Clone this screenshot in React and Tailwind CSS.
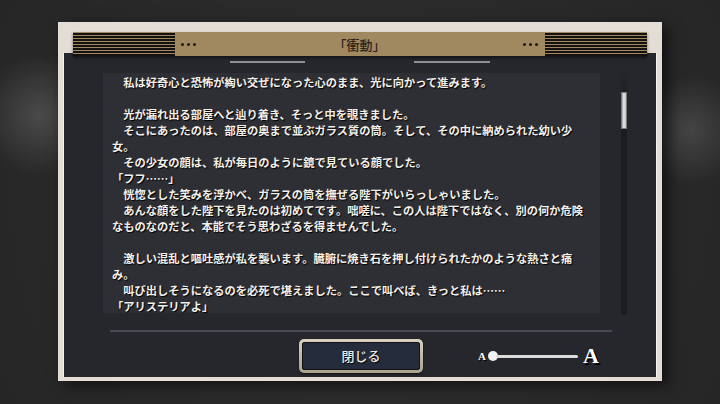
import React from 'react';

const lines = [
  '\u3000私は好奇心と恐怖が綯い交ぜになった心のまま、光に向かって進みます。',
  '',
  '\u3000光が漏れ出る部屋へと辿り着き、そっと中を覗きました。',
  '\u3000そこにあったのは、部屋の奥まで並ぶガラス質の筒。そして、その中に納められた幼い少',
  '女。',
  '\u3000その少女の顔は、私が毎日のように鏡で見ている顔でした。',
  '「フフ……」',
  '\u3000恍惚とした笑みを浮かべ、ガラスの筒を撫ぜる陛下がいらっしゃいました。',
  '\u3000あんな顔をした陛下を見たのは初めてです。咄嗟に、この人は陛下ではなく、別の何か危険',
  'なものなのだと、本能でそう思わざるを得ませんでした。',
  '',
  '\u3000激しい混乱と嘔吐感が私を襲います。臓腑に焼き石を押し付けられたかのような熱さと痛',
  'み。',
  '\u3000叫び出しそうになるのを必死で堪えました。ここで叫べば、きっと私は……',
  '「アリステリアよ」',
];

const Stripes = () => (
  <div className="w-[102px] flex flex-col gap-[1px] py-[1px]">
    {[0, 1, 2, 3, 4, 5, 6, 7].map((i) => (
      <div key={i} className="h-[2px] bg-[#141210]" />
    ))}
  </div>
);

const Dots = () => (
  <div className="flex gap-[3px] items-center">
    <span className="w-[3px] h-[3px] rounded-full bg-[#1c1812]" />
    <span className="w-[3px] h-[3px] rounded-full bg-[#1c1812]" />
    <span className="w-[3px] h-[3px] rounded-full bg-[#1c1812]" />
  </div>
);

export default function App() {
  return (
    <div
      className="w-[720px] h-[404px] overflow-hidden bg-[#2b2b2b] bg-[radial-gradient(circle_at_40px_115px,#4a4a4a_0,transparent_60px),radial-gradient(circle_at_690px_130px,#444_0,transparent_55px),radial-gradient(circle_at_360px_200px,#303030_0,#262626_420px)] pt-[22px] pl-[58px]"
      style={{ fontFamily: '"Noto Sans CJK JP", "Noto Sans", sans-serif' }}
    >
      {/* frame */}
      <div className="w-[604px] h-[359px] bg-[#e4ddd6] pt-[10px] shadow-[6px_4px_14px_rgba(0,0,0,0.6)]">
        {/* header */}
        <div className="relative z-10 mx-[15px] h-[24px] bg-[#a08961] flex items-center shadow-[0_2px_3px_rgba(0,0,0,0.5)]">
          <Stripes />
          <div className="ml-[6px]"><Dots /></div>
          <div className="flex-1 text-center text-[13px] font-medium text-[#2a231a] leading-none">「衝動」</div>
          <div className="mr-[7px]"><Dots /></div>
          <Stripes />
        </div>

        {/* panel */}
        <div className="mx-[5px] -mt-[3px] h-[324px] bg-[#26272c] border-x border-[#f6f3ef] border-b-0">
          <div className="flex justify-center gap-[109px] pt-[8px]">
            <div className="w-[75px] h-[2px] bg-[#8d8f93]" />
            <div className="w-[76px] h-[2px] bg-[#8d8f93]" />
          </div>

          <div className="flex items-start mt-[10px]">
            <div className="ml-[39px] w-[497px] h-[240px] overflow-hidden bg-[#2e2f34] pl-[9px] pt-[1px]">
              {lines.map((l, i) => (
                <div
                  key={i}
                  className="h-[16px] leading-[16px] text-[11.25px] font-bold text-[#f3f0ea] whitespace-pre [text-shadow:1px_1px_1px_#000]"
                >
                  {l || '\u00a0'}
                </div>
              ))}
            </div>
            <div className="ml-[21px] -mt-[3px] w-[6px] h-[245px] bg-[linear-gradient(#26272c,#1c1d20_30px,#1c1d20)] pt-[22px]">
              <div className="w-[6px] h-[37px] bg-[linear-gradient(90deg,#9a9a9a,#e2e2e2_40%,#c4c4c4)] border border-[#7a7a7a]" />
            </div>
          </div>

          <div className="ml-[46px] mt-[15px] w-[502px] h-[2px] bg-[#464a53]" />

          <div className="flex items-center mt-[7px]">
            <div className="ml-[235px] w-[124px] h-[34px] rounded-[5px] p-[3px] bg-[linear-gradient(#d8d1bf,#a9a28c)] shadow-[0_1px_2px_rgba(0,0,0,0.6)]">
              <div className="w-full h-full rounded-[2px] bg-[#252c3b] border border-[#101218] flex items-center justify-center text-[13px] text-[#eeeae2] font-medium [text-shadow:1px_1px_1px_#000]">
                閉じる
              </div>
            </div>
            <div className="ml-[55px] flex items-center">
              <span
                className="text-[11px] font-bold text-white leading-none [text-shadow:1px_1px_0_#000]"
                style={{ fontFamily: '"Liberation Serif", serif' }}
              >
                A
              </span>
              <div className="ml-[2px] w-[10px] h-[10px] rounded-full bg-[#f2f2f2]" />
              <div className="-ml-[2px] w-[82px] h-[3px] rounded-full bg-[#dcdcdc]" />
              <span
                className="ml-[5px] text-[22px] font-bold text-white leading-none [text-shadow:2px_2px_0_#000]"
                style={{ fontFamily: '"Liberation Serif", serif' }}
              >
                A
              </span>
            </div>
          </div>
        </div>
      </div>
    </div>
  );
}
